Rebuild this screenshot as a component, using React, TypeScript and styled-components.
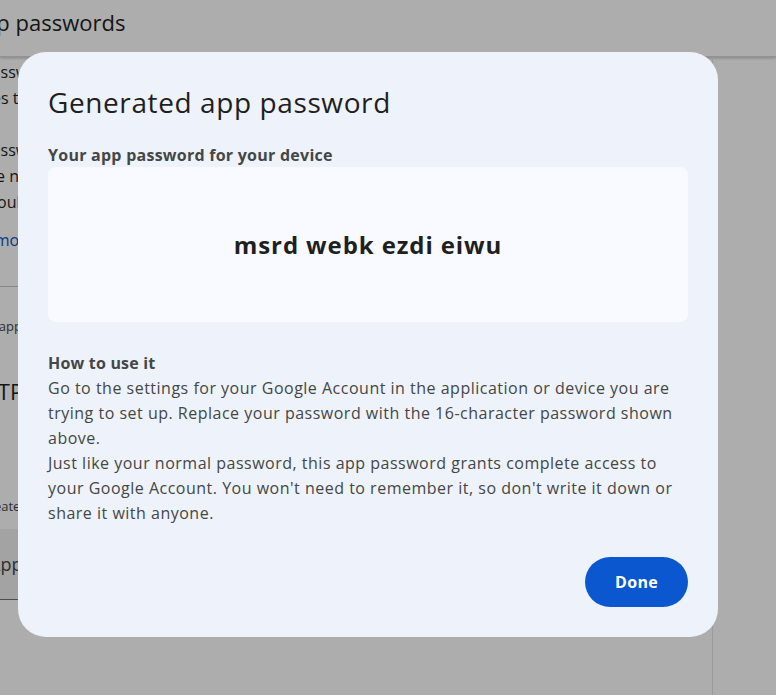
import React from "react";
import styled, { createGlobalStyle } from "styled-components";

const GlobalStyle = createGlobalStyle`
  html, body { margin: 0; padding: 0; }
  body {
    overflow: hidden;
    background: #ffffff;
    font-family: "Open Sans", "Noto Sans", Arial, sans-serif;
    color: #1f1f1f;
  }
`;

const Page = styled.div`
  width: 776px;
  height: 695px;
  background: #ffffff;
  overflow: hidden;
  display: flex;
  flex-direction: column;
`;

const Header = styled.header`
  height: 57px;
  box-sizing: border-box;
  flex: none;
  display: flex;
  align-items: center;
  padding-bottom: 12px;
  color: #1f1f1f;
  box-shadow: 0 1px 3px rgba(0, 0, 0, 0.25);
  border-bottom: 1px solid #d8d8d8;
`;

const HeaderTitle = styled.h1`
  margin: 0 0 0 -31px;
  font-size: 22px;
  font-weight: 400;
  white-space: nowrap;
`;

const Body = styled.div`
  flex: 1;
  display: flex;
`;

const Column = styled.main`
  width: 712px;
  flex: none;
  border-right: 1px solid #e3e3e3;
  display: flex;
  flex-direction: column;
  overflow: hidden;
`;

const Intro = styled.div`
  margin: 2px 0 0 -52px;
  font-size: 16px;
  line-height: 26px;
  color: #1f1f1f;
  white-space: nowrap;
`;

const IntroPara = styled.p<{ $gap?: number }>`
  margin: 0 0 ${(p) => p.$gap ?? 0}px;
`;

const LearnMore = styled.a`
  color: #0b57d0;
  text-decoration: none;
`;

const Divider = styled.hr`
  margin: 0;
  border: 0;
  border-top: 1px solid #c4c7c5;
`;

const Small = styled.div<{ $top: number; $shift: number }>`
  margin: ${(p) => p.$top}px 0 0 ${(p) => -p.$shift}px;
  font-size: 13px;
  line-height: 18px;
  color: #444746;
  white-space: nowrap;
`;

const Big = styled.div`
  margin: 42px 0 0 -34px;
  font-size: 22px;
  line-height: 28px;
  color: #1f1f1f;
  white-space: nowrap;
`;

const Band = styled.div`
  margin-top: 14px;
  height: 70px;
  background: #f0f0f0;
  border-bottom: 1px solid #747775;
  display: flex;
  align-items: center;
  font-size: 18px;
  color: #444746;
`;

const BandText = styled.span`
  margin-left: -11px;
  white-space: nowrap;
`;

const Scrim = styled.div`
  position: fixed;
  inset: 0;
  background: rgba(0, 0, 0, 0.32);
  display: flex;
  align-items: flex-start;
  justify-content: flex-start;
  padding: 52px 0 0 18px;
`;

const Dialog = styled.section`
  width: 700px;
  box-sizing: border-box;
  background: #eef2fa;
  border-radius: 28px;
  padding: 24px 30px 30px;
  display: flex;
  flex-direction: column;
`;

const Title = styled.h2`
  margin: 0;
  font-size: 28px;
  line-height: 52px;
  font-weight: 400;
  letter-spacing: 0.6px;
  color: #1f1f1f;
`;

const Label = styled.div`
  margin-top: 15px;
  font-size: 16px;
  font-weight: 700;
  line-height: 24px;
  letter-spacing: 0.25px;
  color: #444746;
`;

const PasswordBox = styled.div`
  height: 155px;
  background: #f8faff;
  border-radius: 8px;
  display: flex;
  align-items: center;
  justify-content: center;
`;

const Password = styled.strong`
  font-size: 24px;
  font-weight: 700;
  letter-spacing: 0.9px;
  color: #1f1f1f;
`;

const HowTo = styled.div`
  margin-top: 29px;
  font-size: 16px;
  line-height: 25px;
  letter-spacing: 0.5px;
  color: #444746;
`;

const HowToTitle = styled.div`
  font-weight: 700;
  letter-spacing: 0.2px;
`;

const HowToText = styled.p`
  margin: 0;
`;

const Actions = styled.div`
  margin-top: 31px;
  display: flex;
  justify-content: flex-end;
`;

const DoneButton = styled.button`
  width: 103px;
  height: 50px;
  border: 0;
  border-radius: 25px;
  background: #0b57d0;
  color: #ffffff;
  font-family: inherit;
  font-size: 16px;
  font-weight: 700;
  letter-spacing: 0.3px;
  cursor: pointer;
`;

export default function App() {
  return (
    <>
      <GlobalStyle />
      <Page>
        <Header>
          <HeaderTitle>App passwords</HeaderTitle>
        </Header>
        <Body>
          <Column>
            <Intro>
              <IntroPara>App passwords help you sign into your Google Account</IntroPara>
              <IntroPara $gap={26}>Services that don't support modern security standards.</IntroPara>
              <IntroPara>App passwords are less secure than using up-to-date apps</IntroPara>
              <IntroPara>and are not recommended in most cases. Before you create</IntroPara>
              <IntroPara $gap={12}>you should check if your app needs this in order to sign in.</IntroPara>
              <IntroPara $gap={33}>
                <LearnMore href="#">Learn more</LearnMore>
              </IntroPara>
            </Intro>
            <Divider />
            <Small $top={30} $shift={33}>Your app passwords</Small>
            <Big>SMTP</Big>
            <Small $top={92} $shift={36}>To create a new app specific password</Small>
            <Band>
              <BandText>App name</BandText>
            </Band>
          </Column>
        </Body>
      </Page>
      <Scrim>
        <Dialog role="dialog" aria-labelledby="dlg-title">
          <Title id="dlg-title">Generated app password</Title>
          <Label>Your app password for your device</Label>
          <PasswordBox>
            <Password>msrd webk ezdi eiwu</Password>
          </PasswordBox>
          <HowTo>
            <HowToTitle>How to use it</HowToTitle>
            <HowToText>
              Go to the settings for your Google Account in the application or device you are
              trying to set up. Replace your password with the 16-character password shown above.
            </HowToText>
            <HowToText>
              Just like your normal password, this app password grants complete access to your
              Google Account. You won't need to remember it, so don't write it down or share it
              with anyone.
            </HowToText>
          </HowTo>
          <Actions>
            <DoneButton>Done</DoneButton>
          </Actions>
        </Dialog>
      </Scrim>
    </>
  );
}
